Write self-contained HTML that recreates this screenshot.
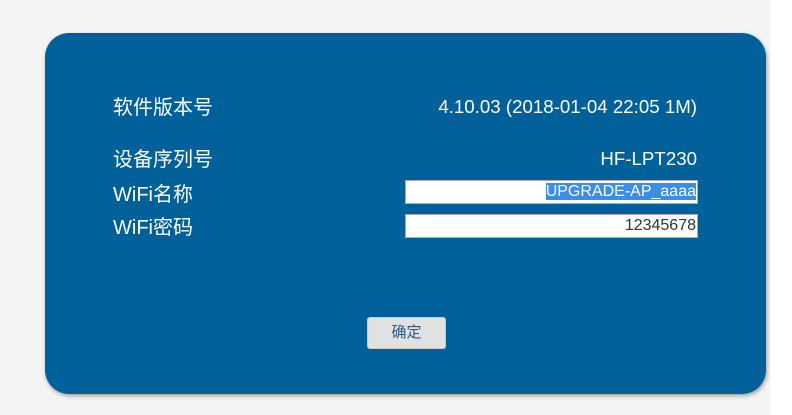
<!DOCTYPE html>
<html><head><meta charset="utf-8"><style>
body{margin:0;width:792px;height:415px;background:#fff;position:relative;overflow:hidden;font-family:"Liberation Sans","Noto Sans CJK SC",sans-serif;}
.bg{position:absolute;left:0;top:0;width:770px;height:415px;background:#f4f4f4;}
.panel{position:absolute;left:45px;top:33px;width:721px;height:361px;background:#00609a;border-radius:24px;box-shadow:1px 2px 4px rgba(0,0,0,.35);}
.t{position:absolute;color:#fff;font-size:20px;line-height:24px;white-space:nowrap;}
.r{text-align:right;right:69px;}
.in{position:absolute;left:360px;width:293px;height:24px;background:#fff;border:1px solid #aab;box-sizing:border-box;font-size:16px;line-height:22px;text-align:right;padding-right:1px;color:#333;}
.sel{background:#3b8ee8;color:#fff;}
.btn{position:absolute;left:322px;top:284px;width:79px;height:32px;background:#e1e1e1;border-radius:3px;border:1px solid #ccc;box-sizing:border-box;text-align:center;line-height:30px;font-size:15px;color:#2a5a8a;}
</style></head><body>
<div class="bg"></div>
<div class="panel">
<div class="t" style="left:68px;top:63px">软件版本号</div>
<div class="t r" style="top:62px;font-size:18.7px">4.10.03 (2018-01-04 22:05 1M)</div>
<div class="t" style="left:68px;top:115px">设备序列号</div>
<div class="t r" style="top:114px;font-size:18.7px">HF-LPT230</div>
<div class="t" style="left:68px;top:150px">WiFi名称</div>
<div class="in" style="top:147px"><span class="sel">UPGRADE-AP_aaaa</span></div>
<div class="t" style="left:68px;top:183px">WiFi密码</div>
<div class="in" style="top:181px">12345678</div>
<div class="btn">确定</div>
</div>
</body></html>
